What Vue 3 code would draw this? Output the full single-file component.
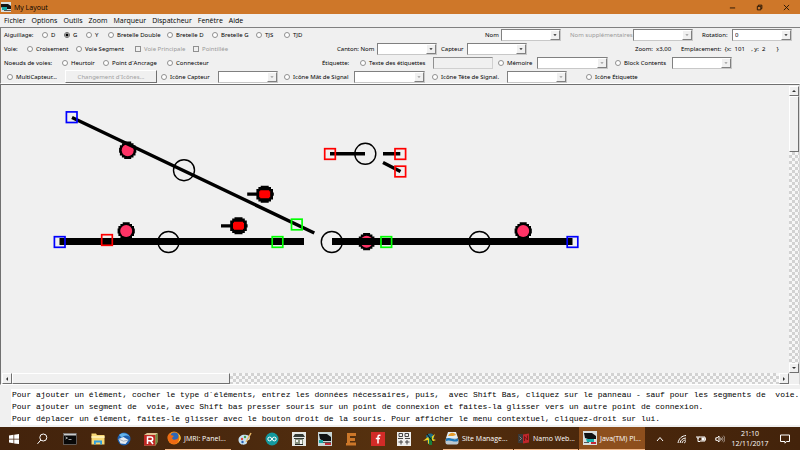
<script setup>
import { ref } from 'vue'

const turnout = ref('G')

const rows = [
  {
    name: 'turnouts',
    items: [
      { kind: 'text', text: 'Aiguillage:' },
      { kind: 'radio', text: 'D', value: 'D' },
      { kind: 'radio', text: 'G', value: 'G' },
      { kind: 'radio', text: 'Y', value: 'Y' },
      { kind: 'radio', text: 'Bretelle Double', value: 'BD' },
      { kind: 'radio', text: 'Bretelle D', value: 'BRD' },
      { kind: 'radio', text: 'Bretelle G', value: 'BRG' },
      { kind: 'radio', text: 'TJS', value: 'TJS' },
      { kind: 'radio', text: 'TJD', value: 'TJD' },
      { kind: 'label', text: 'Nom', target: 'nom' },
      { kind: 'combo', id: 'nom' },
      { kind: 'label', text: 'Nom supplémentaires', target: 'nomsup', off: true },
      { kind: 'combo', id: 'nomsup', off: true },
      { kind: 'label', text: 'Rotation:', target: 'rotation' },
      { kind: 'combo', id: 'rotation', value: '0' }
    ]
  },
  {
    name: 'tracks',
    items: [
      { kind: 'text', text: 'Voie:' },
      { kind: 'radio', text: 'Croisement', value: 'CR' },
      { kind: 'radio', text: 'Voie Segment', value: 'VS' },
      { kind: 'check', text: 'Voie Principale', off: true },
      { kind: 'check', text: 'Pointillée', off: true },
      { kind: 'label', text: 'Canton: Nom', target: 'canton' },
      { kind: 'combo', id: 'canton' },
      { kind: 'label', text: 'Capteur', target: 'capteur' },
      { kind: 'combo', id: 'capteur' },
      { kind: 'text', text: 'Zoom:  x3,00' },
      { kind: 'text', text: 'Emplacement:  {x:  101    , y:  2       }' }
    ]
  },
  {
    name: 'nodes',
    items: [
      { kind: 'text', text: 'Noeuds de voies:' },
      { kind: 'radio', text: 'Heurtoir', value: 'HE' },
      { kind: 'radio', text: 'Point d´Ancrage', value: 'PA' },
      { kind: 'radio', text: 'Connecteur', value: 'CO' },
      { kind: 'text', text: 'Étiquette:' },
      { kind: 'radio', text: 'Texte des étiquettes', value: 'TE' },
      { kind: 'field', name: 'Texte des étiquettes' },
      { kind: 'radio', text: 'Mémoire', value: 'ME' },
      { kind: 'combo', id: 'memoire', name: 'Mémoire', off: true, wide: true },
      { kind: 'radio', text: 'Block Contents', value: 'BC' },
      { kind: 'combo', id: 'block', name: 'Block Contents', off: true }
    ]
  },
  {
    name: 'icons',
    items: [
      { kind: 'radio', text: 'MultiCapteur...', value: 'MC' },
      { kind: 'button', text: 'Changement d´Icônes...' },
      { kind: 'radio', text: 'Icône Capteur', value: 'IC' },
      { kind: 'combo', id: 'icapteur', name: 'Icône Capteur', off: true },
      { kind: 'radio', text: 'Icône Mât de Signal', value: 'IM' },
      { kind: 'combo', id: 'imat', name: 'Icône Mât de Signal', off: true, wide: true },
      { kind: 'radio', text: 'Icône Tête de Signal.', value: 'IT' },
      { kind: 'combo', id: 'itete', name: 'Icône Tête de Signal', off: true },
      { kind: 'radio', text: 'Icône Étiquette', value: 'IE' }
    ]
  }
]

const menus = ['Fichier', 'Options', 'Outils', 'Zoom', 'Marqueur', 'Dispatcheur', 'Fenêtre', 'Aide']

const help = [
  'Pour ajouter un élément, cocher le type d´éléments, entrez les données nécessaires, puis,  avec Shift Bas, cliquez sur le panneau - sauf pour les segments de  voie.',
  'Pour ajouter un segment de  voie, avec Shift bas presser souris sur un point de connexion et faites-la glisser vers un autre point de connexion.',
  'Pour déplacer un élément, faites-le glisser avec le bouton droit de la souris. Pour afficher le menu contextuel, cliquez-droit sur lui.'
]

const handles = [
  [71.7, 117.2, '#0000ff'], [59.7, 242, '#0000ff'], [572.5, 242, '#0000ff'],
  [107, 240, '#ff0000'], [330, 154, '#ff0000'], [400.3, 154, '#ff0000'], [400.3, 171.5, '#ff0000'],
  [296.8, 224.5, '#00ff00'], [277.5, 242, '#00ff00'], [386.3, 242, '#00ff00']
]
const circles = [[184, 170.2], [168.5, 242], [331.8, 242], [365.3, 153.8], [479.5, 242]]
const sensors = [[127.7, 150.3], [126.2, 231], [523.2, 231], [366.6, 241.7]]
const signals = [[264.7, 194.2], [238.5, 225.8]]
</script>

<template>
  <div class="window">
    <header class="title">
      <svg class="app" viewBox="0 0 10 10"><rect width="10" height="10" fill="#d8e0e0" /><path d="M0 2h7l3 2v3H3L0 5z" fill="#151515" /><path d="M1 5h5v3H1z" fill="#19a7a5" /><path d="M3 8h7v1H3z" fill="#555" /></svg>
      <h1>My Layout</h1>
      <button aria-label="Réduire"><svg viewBox="0 0 8 8"><path d="M1 4.5h6" /></svg></button>
      <button aria-label="Restaurer"><svg viewBox="0 0 8 8"><path d="M1.5 2.7h4v4h-4zM2.7 2.5v-1.2h4v4h-1" /></svg></button>
      <button aria-label="Fermer"><svg viewBox="0 0 8 8"><path d="M1 1l6 6M7 1l-6 6" /></svg></button>
    </header>

    <nav class="menu">
      <button v-for="m in menus" :key="m">{{ m }}</button>
    </nav>

    <section class="tools">
      <div v-for="row in rows" :key="row.name" class="row" :class="row.name">
        <template v-for="(it, i) in row.items" :key="i">
          <span v-if="it.kind === 'text'" class="text">{{ it.text }}</span>
          <label v-else-if="it.kind === 'label'" :for="it.target" :class="{ off: it.off }">{{ it.text }}</label>
          <label v-else-if="it.kind === 'radio'" class="choice">
            <input v-model="turnout" type="radio" name="tool" :value="it.value" />{{ it.text }}
          </label>
          <label v-else-if="it.kind === 'check'" class="choice off">
            <input type="checkbox" disabled />{{ it.text }}
          </label>
          <span v-else-if="it.kind === 'combo'" class="combo" :class="{ wide: it.wide, off: it.off }">
            <select :id="it.id" :aria-label="it.name" :disabled="it.off"><option>{{ it.value }}</option></select>
            <svg viewBox="0 0 10 10"><path d="M3 4h4L5 6.4z" /></svg>
          </span>
          <input v-else-if="it.kind === 'field'" class="field" type="text" :aria-label="it.name" disabled />
          <button v-else class="change" disabled>{{ it.text }}</button>
        </template>
      </div>
    </section>

    <main class="pane">
      <svg class="layout" viewBox="2 86 787 287" preserveAspectRatio="xMinYMin meet">
        <g v-for="(s, i) in sensors" :key="'s' + i" :transform="`translate(${s[0]} ${s[1]})`">
          <path d="M-3.500-8.700h7v1.600h2.300v2h2v2.600h.8v5h-.8v2.600h-2v2h-2.300v1.500h-7v-1.500h-2.300v-2h-2v-2.600h-.8v-5h.8v-2.600h2v-2h2.300z" />
          <circle r="6" fill="#ff3366" />
        </g>
        <g v-for="(s, i) in signals" :key="'g' + i" :transform="`translate(${s[0]} ${s[1]})`">
          <path d="M-17.500-1.600h9.200v-3.700h2v-2h2.300v-1.200h8v1.200h2.300v2h2v3.700h.8v3.200h-.8v3.700h-2v2h-2.300v1.200h-8v-1.200h-2.300v-2h-2v-3.700h-9.200z" />
          <path d="M-4.500-4h9v1h1v6h-1v1h-9v-1h-1v-6h1z" fill="#ff0000" />
        </g>
        <g stroke="#000" stroke-width="3.4">
          <path d="M72 117.500L314.300 233M330 153.700H365M383 153.700H400.300M383 162.500L400.500 171.500" />
        </g>
        <path d="M59.500 241.500H304M332 241.500H572.500" stroke="#000" stroke-width="7" />
        <g fill="none">
          <circle v-for="(c, i) in circles" :key="'c' + i" :cx="c[0]" :cy="c[1]" r="10.5" stroke="#000" stroke-width="1.4" />
          <rect v-for="(h, i) in handles" :key="'h' + i" :x="h[0] - 5.3" :y="h[1] - 5.3" width="10.6" height="10.6" :stroke="h[2]" stroke-width="1.7" />
        </g>
      </svg>
      <div class="bar vertical">
        <button aria-label="Haut"><svg viewBox="0 0 8 8"><path d="M2 5h4L4 3z" /></svg></button>
        <i class="thumb"></i><i class="track"></i>
        <button aria-label="Bas"><svg viewBox="0 0 8 8"><path d="M2 3h4L4 5z" /></svg></button>
      </div>
      <div class="bar horizontal">
        <button aria-label="Gauche"><svg viewBox="0 0 8 8"><path d="M5 2v4L3 4z" /></svg></button>
        <i class="thumb"></i><i class="track"></i>
        <button aria-label="Droite"><svg viewBox="0 0 8 8"><path d="M3 2v4l2-2z" /></svg></button>
      </div>
    </main>

    <section class="help">
      <div><p v-for="h in help" :key="h">{{ h }}</p></div>
    </section>

    <footer class="taskbar">
      <button aria-label="Démarrer"><svg viewBox="0 0 14 14"><path fill="#fff" d="M2 3.500l4.500-.7v3.900H2zM7.200 2.700L12 2v4.700H7.200zM2 7.400h4.500v3.900L2 10.600zM7.200 7.400H12v4.700l-4.800-.7z" /></svg></button>
      <button aria-label="Rechercher"><svg viewBox="0 0 14 14" fill="none" stroke="#fff"><circle cx="8.300" cy="5.500" r="3.500" /><path d="M5.800 8L2.500 11.800" /></svg></button>
      <button aria-label="Invite de commandes"><svg viewBox="0 0 14 14"><rect x=".5" y="1.500" width="13" height="11" fill="#080808" stroke="#888" stroke-width=".6" /><rect x="1" y="1.700" width="12" height="1.800" fill="#ccc" /><path d="M2.500 5l2 1-2 1M5.500 7.500h3" stroke="#ddd" stroke-width=".7" fill="none" /></svg></button>
      <button aria-label="Explorateur"><svg viewBox="0 0 14 14"><path d="M.5 1.500h4.500l1 1.500h7.500V12.500H.5z" fill="#f6d775" /><path d="M.5 4h13v2H.5z" fill="#fdeeb0" /><path d="M3 12.500V8.500h8v4H9.200V10.500H4.800v2z" fill="#2e9fe0" /></svg></button>
      <button aria-label="Courrier"><svg viewBox="0 0 14 14"><circle cx="7" cy="7" r="6.500" fill="#1d5fae" /><path d="M2 3c3-3 9-2 11 2-3-2-6-2-8 1z" fill="#63b3ea" /><path d="M1.500 7l5-2 5 3-3 4-5-.5z" fill="#e7edf3" /><path d="M2 7.200l4.500 2 5-1.200" fill="none" stroke="#8796a8" stroke-width=".7" /></svg></button>
      <button aria-label="R"><svg viewBox="0 0 14 14"><path d="M0 3l3-2h10.500v9l-2 3.500H0z" fill="#dfc392" /><rect x="0" y="3" width="11.500" height="10.500" fill="#bf2722" /><path d="M11.500 3l2-2v9l-2 3.500z" fill="#6c8c3f" /><path d="M3.500 12V5h3.300a1.900 1.900 0 010 3.800H3.500M6.500 8.800L9 12" fill="none" stroke="#fff" stroke-width="1.500" /></svg></button>
      <button class="task"><svg viewBox="0 0 14 14"><circle cx="7" cy="7" r="6.500" fill="#f28a17" /><circle cx="7.500" cy="5.500" r="4" fill="#2c68b8" /><path d="M1 4c1-1 2-1 3 0l3 1-2 2c1 3 5 2 7-1 1 4-2 7-5 7-4 0-7-3-6-9z" fill="#ee6a13" /><path d="M11 3c2 2 2 5 0 8 4-2 3-7 0-8z" fill="#fdd43b" /></svg>JMRI: Panel...</button>
      <button aria-label="Paint"><svg viewBox="0 0 14 14"><path d="M.5 8c0-4 4-6 8-5 4 0 4 4 2.500 5-2 0-2 1-2 3-2 3-8.500 2-8.500-3z" fill="#c7e2f3" /><circle cx="4" cy="7" r="1.200" fill="#de493c" /><circle cx="7" cy="5" r="1.200" fill="#4b9b46" /><circle cx="4.500" cy="10" r="1.200" fill="#295fb4" /><path d="M13 1L8 10" stroke="#e9b866" stroke-width="1.500" /></svg></button>
      <button aria-label="Arduino"><svg viewBox="0 0 14 14"><circle cx="7" cy="7" r="6.500" fill="#13999e" /><g fill="none" stroke="#fff"><circle cx="4.700" cy="7" r="1.900" /><circle cx="9.300" cy="7" r="1.900" /></g></svg></button>
      <button aria-label="Gare"><svg viewBox="0 0 14 14"><path d="M0 0h14v14H0z" fill="#e7e9e5" /><path d="M1 5l2-3h8l2 3zM2 6h10v1H2z" fill="#353b36" /><path d="M3 7h8v5H3z" fill="#87927f" /><path d="M4 8h2v2H4zM8 8h2v4H8z" fill="#f5f5f5" /><path d="M3 12h8v1H3z" fill="#222" /></svg></button>
      <button aria-label="Locomotive"><svg viewBox="0 0 14 14"><path d="M0 0h14v14H0z" fill="#c8d5d6" /><path d="M1 2h8l4 3v4H5L2 7z" fill="#101214" /><path d="M1 8h4v3H1z" fill="#17a7a6" /><path d="M7 11h6v2H7z" fill="#c22a35" /><path d="M5 10h8v1H5z" fill="#555" /></svg></button>
      <button aria-label="E"><svg viewBox="0 0 14 14"><path d="M3 1h9v3H6v2h5v3H6v1.500h6v3H2V11h1z" fill="#cc7729" /></svg></button>
      <button aria-label="Fritzing"><svg viewBox="0 0 14 14"><path d="M0 0h14v14H0z" fill="#d22b27" /><path d="M9.500 3.500C7 2.500 7 4 7 6v5.500M4.800 6.500H9" stroke="#fff" stroke-width="1.500" fill="none" /></svg></button>
      <button aria-label="Signaux"><svg viewBox="0 0 14 14"><path d="M0 0h14v14H0z" fill="#f0efed" /><path d="M2 1.500h3.500v3H2zM8 1.500h3.500v3H8zM1 6.500h5M8 6.500h5M1.500 10h4.500M8 10h4.500M4 8v4.500M10 8v4.500" fill="none" stroke="#333" stroke-width=".9" /></svg></button>
      <button aria-label="Décodeur"><svg viewBox="0 0 14 14"><path d="M3 4c2-4 9-3 8 2l-3 6H5z" fill="#1f6d87" /><path d="M0 9l5-4 1 2 6-5-2 5 3 1-5 2-3 2V8z" fill="#f0cf25" /><path d="M6 5h3v8H6z" fill="#197e3d" /><path d="M4 2l6 8" stroke="#111" /></svg></button>
      <button class="task"><svg viewBox="0 0 14 14"><path d="M3 1h8l2 6H1z" fill="#e3edf3" /><rect x=".5" y="7" width="13" height="6.500" rx="2" fill="#bcc9d1" /><path d="M3 5c2-4 6-4 8-1L8 5z" fill="#e59b2b" /><path d="M1 8c4-3 8 3 12-1v3c-4 2-8-2-12 0z" fill="#1c77b9" /></svg>Site Manage...</button>
      <button class="task"><svg viewBox="0 0 14 14"><path d="M2 3h5v9H2z" fill="#393939" /><path d="M7 3.500l6-1v9l-6 1z" fill="#bf272b" /><path d="M3.500 5.500l2 2-2 2" stroke="#999" stroke-width=".8" fill="none" /><path d="M8.500 10V5.500l3 3.500V4.500" stroke="#6b1012" stroke-width=".9" fill="none" /></svg>Namo Web...</button>
      <button class="task active"><svg viewBox="0 0 14 14"><path d="M0 0h14v14H0z" fill="#d9dede" /><path d="M1 2h8l4 3v3H5L2 7z" fill="#101214" /><path d="M3 8h8v3H4z" fill="#18b0ad" /><path d="M8 11h5v2H8z" fill="#c22a35" /><path d="M1 11h5v1H1z" fill="#555" /></svg>Java(TM) Pl...</button>
      <button class="tray" aria-label="Icônes cachées"><svg viewBox="0 0 10 10"><path d="M2 7l3-3.500L8 7" /></svg></button>
      <button class="tray" aria-label="Réseau"><svg viewBox="0 0 10 10"><path d="M1 9C2 4 5 2 9 1.500M3 9c.5-3 3-5 6-5M5 9c.5-2 2-3 4-3M7.500 9.200c0-1 .5-1.500 1.500-1.500" /></svg></button>
      <button class="tray" aria-label="Batterie"><svg viewBox="0 0 10 10"><path d="M3.500 3H9v4H4M9.500 4.300v1.500" /><path d="M5.500 3.500h3v3h-3z" fill="#fff" stroke="none" /><path d="M1 2v2h2V2M2 4v3.500h2" /></svg></button>
      <button class="tray" aria-label="Volume"><svg viewBox="0 0 10 10"><path d="M.8 3.800h1.400L4 2v6L2.200 6.300H.8zM5.500 3.700c.8 1 .8 1.800 0 2.700" /><path d="M7 2.700c1.300 1.500 1.300 3.300 0 4.700M8.500 1.700c1.800 2 1.800 4.600 0 6.600" opacity=".5" /></svg></button>
      <time>21:10<br />12/11/2017</time>
      <button class="tray" aria-label="Notifications"><svg viewBox="0 0 10 10"><path d="M.5 1h9v6.500H6.500L5 9.200V7.500H.5z" /></svg></button>
    </footer>
  </div>
</template>

<style>
body { margin: 0; }
</style>

<style scoped>
* { box-sizing: border-box; }
.window {
  display: flex;
  flex-direction: column;
  height: 100vh;
  overflow: hidden;
  background: #f0f0f0;
  color: #000;
  font-family: "Open Sans", "Noto Sans", sans-serif;
  font-size: 7px;
}
button, input, select { font: inherit; color: inherit; margin: 0; padding: 0; border: 0; background: none; }
svg { display: block; }
.title { display: flex; align-items: center; height: 14px; background: #ce7729; }
.title .app { width: 10px; height: 10px; margin: 0 3px 0 1px; }
.title h1 { flex: 1; margin: 0; font-size: 7px; font-weight: 400; }
.title button { width: 27px; display: grid; place-items: center; }
.title button svg { width: 7px; height: 7px; fill: none; stroke: #1c1005; }
.menu { display: flex; align-items: center; gap: 6px; height: 13px; padding-left: 4px; }
.menu button { white-space: nowrap; }
.tools {
  display: grid;
  grid-auto-rows: 13px;
  gap: 1px;
  height: 57px;
  border-top: 1px solid #808080;
  border-left: 1px solid #808080;
  border-bottom: 1px solid #fff;
  font-family: "Noto Sans", sans-serif;
  font-size: 6px;
  line-height: 8px;
}
.row { display: grid; align-items: center; padding-left: 3px; }
.row > * { min-width: 0; white-space: pre; }
.turnouts { grid-template-columns: 38fr 22fr 22fr 22fr 59fr 45fr 44fr 28fr 201fr 16fr 69fr 63fr 69fr 30fr 68fr; }
.tracks { grid-template-columns: 23fr 49fr 59fr 58fr 144fr 40fr 64fr 26fr 168fr 46fr 119fr; }
.nodes { grid-template-columns: 58fr 41fr 64fr 155fr 38fr 73fr 65fr 39fr 78fr 57fr 128fr; }
.icons { grid-template-columns: 58fr 96fr 57fr 66fr 70fr 78fr 75fr 79fr 214fr; padding-left: 6px; }
.choice { display: flex; align-items: center; gap: 3px; }
.choice input { appearance: none; flex: none; width: 6px; height: 6px; background: #fff; border: 1px solid #909090; }
.choice input[type="radio"] { border-radius: 50%; }
.choice input:checked { background: radial-gradient(circle, #000 1px, #fff 2px); border-color: #666; }
.choice input:disabled { background: #f0f0f0; }
label.off { color: #999; }
.combo { display: flex; width: 60px; height: 12px; background: #fff; border: 1px solid #808080; border-right-color: #c8c8c8; border-bottom-color: #c8c8c8; }
.combo.wide { width: 71px; }
.combo select { appearance: none; flex: 1; min-width: 0; padding-left: 2px; outline: 0; opacity: 1; }
.combo svg { width: 10px; height: 10px; flex: none; background: #f0f0f0; border: 1px solid #fff; border-right-color: #808080; border-bottom-color: #808080; fill: #222; }
.combo.off svg { fill: #999; }
.field { width: 60px; height: 12px; border: 1px solid #909090; border-right-color: #d0d0d0; border-bottom-color: #d0d0d0; }
.change { width: 92px; height: 13px; color: #a0a0a0; border: 1px solid #fff; border-right-color: #707070; border-bottom-color: #707070; }
.pane {
  flex: 1;
  min-height: 0;
  display: grid;
  grid-template: minmax(0, 1fr) 11px / minmax(0, 1fr) 10px;
  border: 1px solid #707070;
  border-right-color: #d8d8d8;
  border-bottom-color: #fff;
  padding-top: 1px;
  padding-left: 1px;
}
.layout { width: 100%; height: 100%; min-height: 0; }
.bar { display: flex; min-width: 0; min-height: 0; }
.bar button, .thumb { flex: none; background: #f0f0f0; border: 1px solid #fff; border-right-color: #707070; border-bottom-color: #707070; }
.bar button { width: 10px; height: 10px; }
.bar button svg { width: 8px; height: 8px; fill: #333; }
.track { flex: 1; background: repeating-conic-gradient(#d2d2d2 0 25%, #f7f7f7 0 50%) 0 0 / 6px 6px; }
.vertical { flex-direction: column; }
.vertical .thumb { height: 56px; }
.horizontal .thumb { flex: 217; }
.horizontal .track { flex: 550; }
.horizontal button { height: 11px; }
.help { padding: 4px 0 2px 11px; }
.help div { background: #fff; padding-left: 1px; }
.help p { margin: 0; font: 8px/12px "Liberation Mono", monospace; white-space: pre; }
.taskbar {
  display: grid;
  grid-template-columns: 28fr 28fr 28fr 27fr 25fr 29fr 67fr 26fr 28fr 26fr 26fr 26fr 27fr 26fr 26fr 71fr 65fr 67fr 27fr 18fr 19fr 20fr 40fr 30fr;
  height: 23px;
  background: linear-gradient(90deg, #43230c, #4b290e 30%, #57320f 50%, #4d290c 65%, #43230b);
  color: #fff;
  font-size: 7px;
}
.taskbar > * { min-width: 0; display: grid; place-items: center; }
.taskbar svg { width: 14px; height: 14px; flex: none; }
.taskbar .task { display: flex; align-items: center; gap: 3px; padding-left: 2px; margin-right: 1px; border-bottom: 1px solid #f2b98a; white-space: nowrap; }
.taskbar .active { background: #8d4f1d; padding-left: 4px; }
.taskbar .tray svg { width: 10px; height: 10px; fill: none; stroke: #fff; stroke-width: 1; }
.taskbar time { display: block; align-self: center; text-align: center; line-height: 10px; white-space: nowrap; }
</style>
